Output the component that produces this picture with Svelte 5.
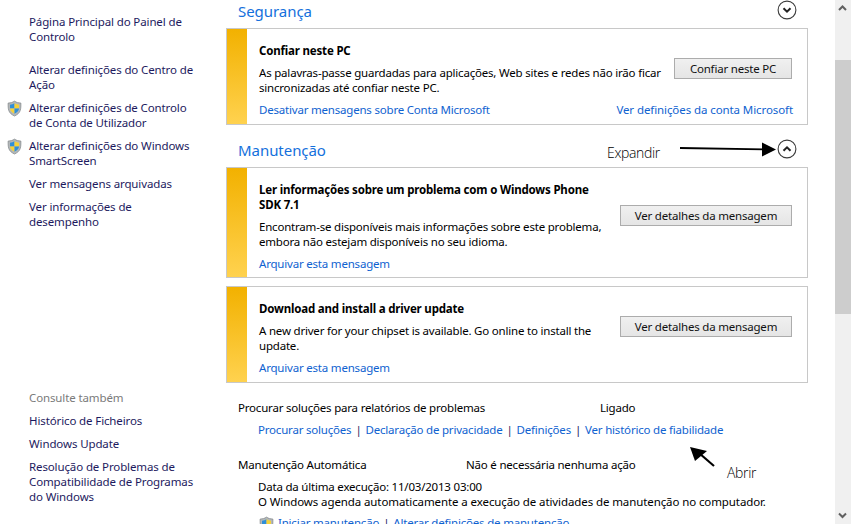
<script>
  const sideTop = [
    { text: 'Página Principal do Painel de Controlo', gap: 'big' },
    { text: 'Alterar definições do Centro de Ação' },
    { text: 'Alterar definições de Controlo de Conta de Utilizador', shield: true },
    { text: 'Alterar definições do Windows SmartScreen', shield: true },
    { text: 'Ver mensagens arquivadas' },
    { text: 'Ver informações de desempenho' }
  ];
  const sideBottom = [
    'Histórico de Ficheiros',
    'Windows Update',
    'Resolução de Problemas de Compatibilidade de Programas do Windows'
  ];
  const problemLinks = ['Procurar soluções', 'Declaração de privacidade', 'Definições', 'Ver histórico de fiabilidade'];
</script>

{#snippet shield(cls)}
  <svg class={cls} width="15" height="17" viewBox="0 0 16 17">
    <path d="M8 .6C6 2 4 2.6 1.200 2.700c0 6-.4 10.600 6.800 13.800 7.200-3.200 6.800-7.800 6.800-13.800C12 2.600 10 2 8 .6z" fill="#b4b8ba" stroke="#84898c" stroke-width=".8"/>
    <path d="M8 3C6.600 3.900 5 4.300 3.200 4.500V8.500H8z" fill="#2f8fd8"/>
    <path d="M8 3c1.400.9 3 1.300 4.800 1.500v4H8z" fill="#f6d238"/>
    <path d="M3.200 8.500H8v5.600C4.600 12.500 3.400 10.800 3.200 8.500z" fill="#f6d238"/>
    <path d="M12.800 8.500H8v5.600c3.400-1.600 4.600-3.300 4.800-5.600z" fill="#2f8fd8"/>
  </svg>
{/snippet}

{#snippet chevron(up)}
  <svg class="chev" width="20" height="20" viewBox="0 0 20 20">
    <circle cx="10" cy="10" r="8.900" fill="#fff" stroke="#3c3c3c" stroke-width="1.100"/>
    <path d={up ? 'M6.500 11.800 10 8.300l3.500 3.500' : 'M6.500 8.200 10 11.700l3.500-3.500'} fill="none" stroke="#222" stroke-width="2"/>
  </svg>
{/snippet}

<div class="window">
  <aside class="side">
    <nav class="sideTop">
      {#each sideTop as item}
        <div class="sideItem" class:big={item.gap}>
          {#if item.shield}{@render shield('sideShield')}{/if}
          {item.text}
        </div>
      {/each}
    </nav>
    <div class="sideBottom">
      <div class="seeAlso">Consulte também</div>
      {#each sideBottom as text}
        <div class="sideItem">{text}</div>
      {/each}
    </div>
  </aside>

  <main class="main">
    <div class="head first">
      <h2>Segurança</h2>
      {@render chevron(false)}
    </div>
    <section class="card trust">
      <div class="stripe"></div>
      <div class="body">
        <div class="row">
          <div class="copy">
            <h3>Confiar neste PC</h3>
            <p>As palavras-passe guardadas para aplicações, Web sites e redes não irão ficar sincronizadas até confiar neste PC.</p>
          </div>
          <button>Confiar neste PC</button>
        </div>
        <div class="links">
          <a href="#a">Desativar mensagens sobre Conta Microsoft</a>
          <a href="#b" class="account">Ver definições da conta Microsoft</a>
        </div>
      </div>
    </section>

    <div class="head second">
      <h2>Manutenção</h2>
      {@render chevron(true)}
    </div>
    <section class="card msg one">
      <div class="stripe"></div>
      <div class="body">
        <div class="row">
          <div class="copy">
            <h3>Ler informações sobre um problema com o Windows Phone SDK 7.1</h3>
            <p>Encontram-se disponíveis mais informações sobre este problema, embora não estejam disponíveis no seu idioma.</p>
          </div>
          <button class="wide">Ver detalhes da mensagem</button>
        </div>
        <a href="#c" class="archive">Arquivar esta mensagem</a>
      </div>
    </section>
    <section class="card msg two">
      <div class="stripe"></div>
      <div class="body">
        <div class="row">
          <div class="copy">
            <h3>Download and install a driver update</h3>
            <p>A new driver for your chipset is available. Go online to install the update.</p>
          </div>
          <button class="wide">Ver detalhes da mensagem</button>
        </div>
        <a href="#d" class="archive">Arquivar esta mensagem</a>
      </div>
    </section>

    <div class="status problems">
      <span class="label">Procurar soluções para relatórios de problemas</span>
      <span>Ligado</span>
    </div>
    <div class="linkRow">
      {#each problemLinks as link, i}
        {#if i > 0}<span class="sep">|</span>{/if}
        <a href="#e">{link}</a>
      {/each}
    </div>

    <div class="status auto">
      <span class="label short">Manutenção Automática</span>
      <span>Não é necessária nenhuma ação</span>
    </div>
    <div class="detail">
      <div>Data da última execução: 11/03/2013 03:00</div>
      <div class="agenda">O Windows agenda automaticamente a execução de atividades de manutenção no computador.</div>
    </div>
    <div class="linkRow last">
      {@render shield('inlineShield')}
      <a href="#f">Iniciar manutenção</a>
      <span class="sep">|</span>
      <a href="#g">Alterar definições de manutenção</a>
    </div>
  </main>

  <div class="scrollbar">
    <svg class="arrowBtn" width="17" height="17" viewBox="0 0 17 17"><path d="M5 10l3.500-3.500L12 10" fill="none" stroke="#606060" stroke-width="2"/></svg>
    <div class="thumb"></div>
    <svg class="arrowBtn" width="17" height="17" viewBox="0 0 17 17"><path d="M5 6.500 8.500 10 12 6.500" fill="none" stroke="#606060" stroke-width="2"/></svg>
  </div>

  <!-- notes drawn on top of the screenshot -->
  <span class="note expand">Expandir</span>
  <span class="note open">Abrir</span>
  <svg class="overlay" width="851" height="524" viewBox="0 0 851 524">
    <path d="M680 148 764 149.300" stroke="#000" stroke-width="1.800"/>
    <path d="M762 142.500 776 149.500 762 156.500z" fill="#000"/>
    <path d="M714 466 699 453" stroke="#000" stroke-width="2.200"/>
    <path d="M690 447 707 451 695 461z" fill="#000"/>
  </svg>
</div>

<style>
  :global(body) {
    margin: 0;
    background: #fff;
  }

  .window {
    position: relative;
    display: flex;
    width: 851px;
    height: 524px;
    overflow: hidden;
    background: #fff;
    color: #000;
    font: 11.5px/15px "Noto Sans", sans-serif;
    letter-spacing: -0.2px;
  }

  .side {
    width: 226px;
    flex: none;
    display: flex;
    flex-direction: column;
    justify-content: space-between;
    padding: 14px 30px 20px 29px;
    box-sizing: border-box;
    letter-spacing: -0.12px;
  }

  .sideTop {
    display: flex;
    flex-direction: column;
    gap: 8px;
  }

  .sideItem {
    position: relative;
    color: #1d1a5e;
  }

  .sideItem.big {
    margin-bottom: 10px;
  }

  .sideBottom {
    display: flex;
    flex-direction: column;
    gap: 8px;
  }

  .seeAlso {
    color: #7a7a7a;
  }

  :global(.sideShield) {
    position: absolute;
    left: -22px;
    top: 0;
  }

  :global(.inlineShield) {
    margin-left: 1px;
    flex: none;
  }

  .main {
    width: 582px;
    flex: none;
    display: flex;
    flex-direction: column;
  }

  .head {
    display: flex;
    align-items: center;
    justify-content: space-between;
    padding: 0 12px;
    height: 20px;
    flex: none;
  }

  .head.first {
    margin-bottom: 8px;
  }

  .head.second {
    margin-top: 14px;
    margin-bottom: 8px;
  }

  h2 {
    margin: 0;
    padding-top: 2px;
    font-size: 15px;
    font-weight: 400;
    line-height: 20px;
    color: #1470dc;
    letter-spacing: -0.05px;
  }

  :global(.chev) {
    margin-right: -1px;
  }

  .card {
    display: flex;
    box-sizing: border-box;
    border: 1px solid #c8c8c8;
    flex: none;
  }

  .trust {
    height: 97px;
  }

  .one {
    height: 111px;
    margin-bottom: 8px;
  }

  .two {
    height: 97px;
  }

  .stripe {
    width: 20px;
    flex: none;
    background: linear-gradient(#f2b100, #ffd24f);
  }

  .body {
    flex: 1;
    display: flex;
    flex-direction: column;
    padding: 14px 14px 6px 12px;
    min-width: 0;
  }

  .trust .body,
  .two .body {
    padding-bottom: 7px;
  }

  .row {
    display: flex;
    align-items: flex-start;
    gap: 15px;
    flex: 1;
  }

  .trust .row {
    gap: 8px;
  }

  .trust button {
    margin-top: 15px;
  }

  .copy {
    flex: 1;
    min-width: 0;
  }

  h3 {
    margin: 0 0 7px;
    font-size: 11.5px;
    line-height: 15px;
    font-weight: 700;
    letter-spacing: -0.18px;
  }

  p {
    margin: 0;
  }

  button {
    width: 118px;
    height: 21px;
    flex: none;
    margin-right: 1px;
    padding: 0;
    box-sizing: border-box;
    border: 1px solid #acacac;
    border-radius: 0;
    background: linear-gradient(#f0f0f0, #e5e5e5);
    color: #111;
    font: inherit;
    letter-spacing: inherit;
  }

  button.wide {
    width: 172px;
  }

  .one button {
    margin-top: 23px;
  }

  .two button {
    margin-top: 15px;
  }

  a {
    color: #0f62d0;
    text-decoration: none;
  }

  .links {
    display: flex;
    justify-content: space-between;
  }

  .account {
    letter-spacing: -0.09px;
  }

  .status {
    display: flex;
    padding-left: 12px;
  }

  .problems {
    margin-top: 17px;
  }

  .auto {
    margin-top: 20px;
  }

  .label {
    width: 362px;
    flex: none;
  }

  .label.short {
    width: 228px;
  }

  .linkRow {
    display: flex;
    align-items: center;
    gap: 4px;
    padding-left: 32px;
    margin-top: 7px;
  }

  .sep {
    color: #1d1a5e;
  }

  .detail {
    padding-left: 32px;
    margin-top: 7px;
  }

  .agenda {
    letter-spacing: -0.1px;
  }

  .linkRow.last {
    align-items: flex-start;
    margin-top: 7px;
  }

  .last a,
  .last .sep {
    margin-top: -1px;
  }

  .scrollbar {
    position: relative;
    margin-left: 27px;
    width: 16px;
    flex: none;
    display: flex;
    flex-direction: column;
    background: #f0f0f0;
    overflow: hidden;
  }

  .arrowBtn {
    flex: none;
    margin-left: -1px;
  }

  .thumb {
    margin-top: 43px;
    height: 254px;
    background: #cdcdcd;
    margin-bottom: auto;
  }

  .note {
    position: absolute;
    font: 300 14px/18px "Open Sans", sans-serif;
    letter-spacing: -0.35px;
    color: #000;
  }

  .expand {
    left: 607px;
    top: 144px;
  }

  .open {
    left: 727px;
    top: 464px;
  }

  .overlay {
    position: absolute;
    left: 0;
    top: 0;
    pointer-events: none;
  }
</style>
